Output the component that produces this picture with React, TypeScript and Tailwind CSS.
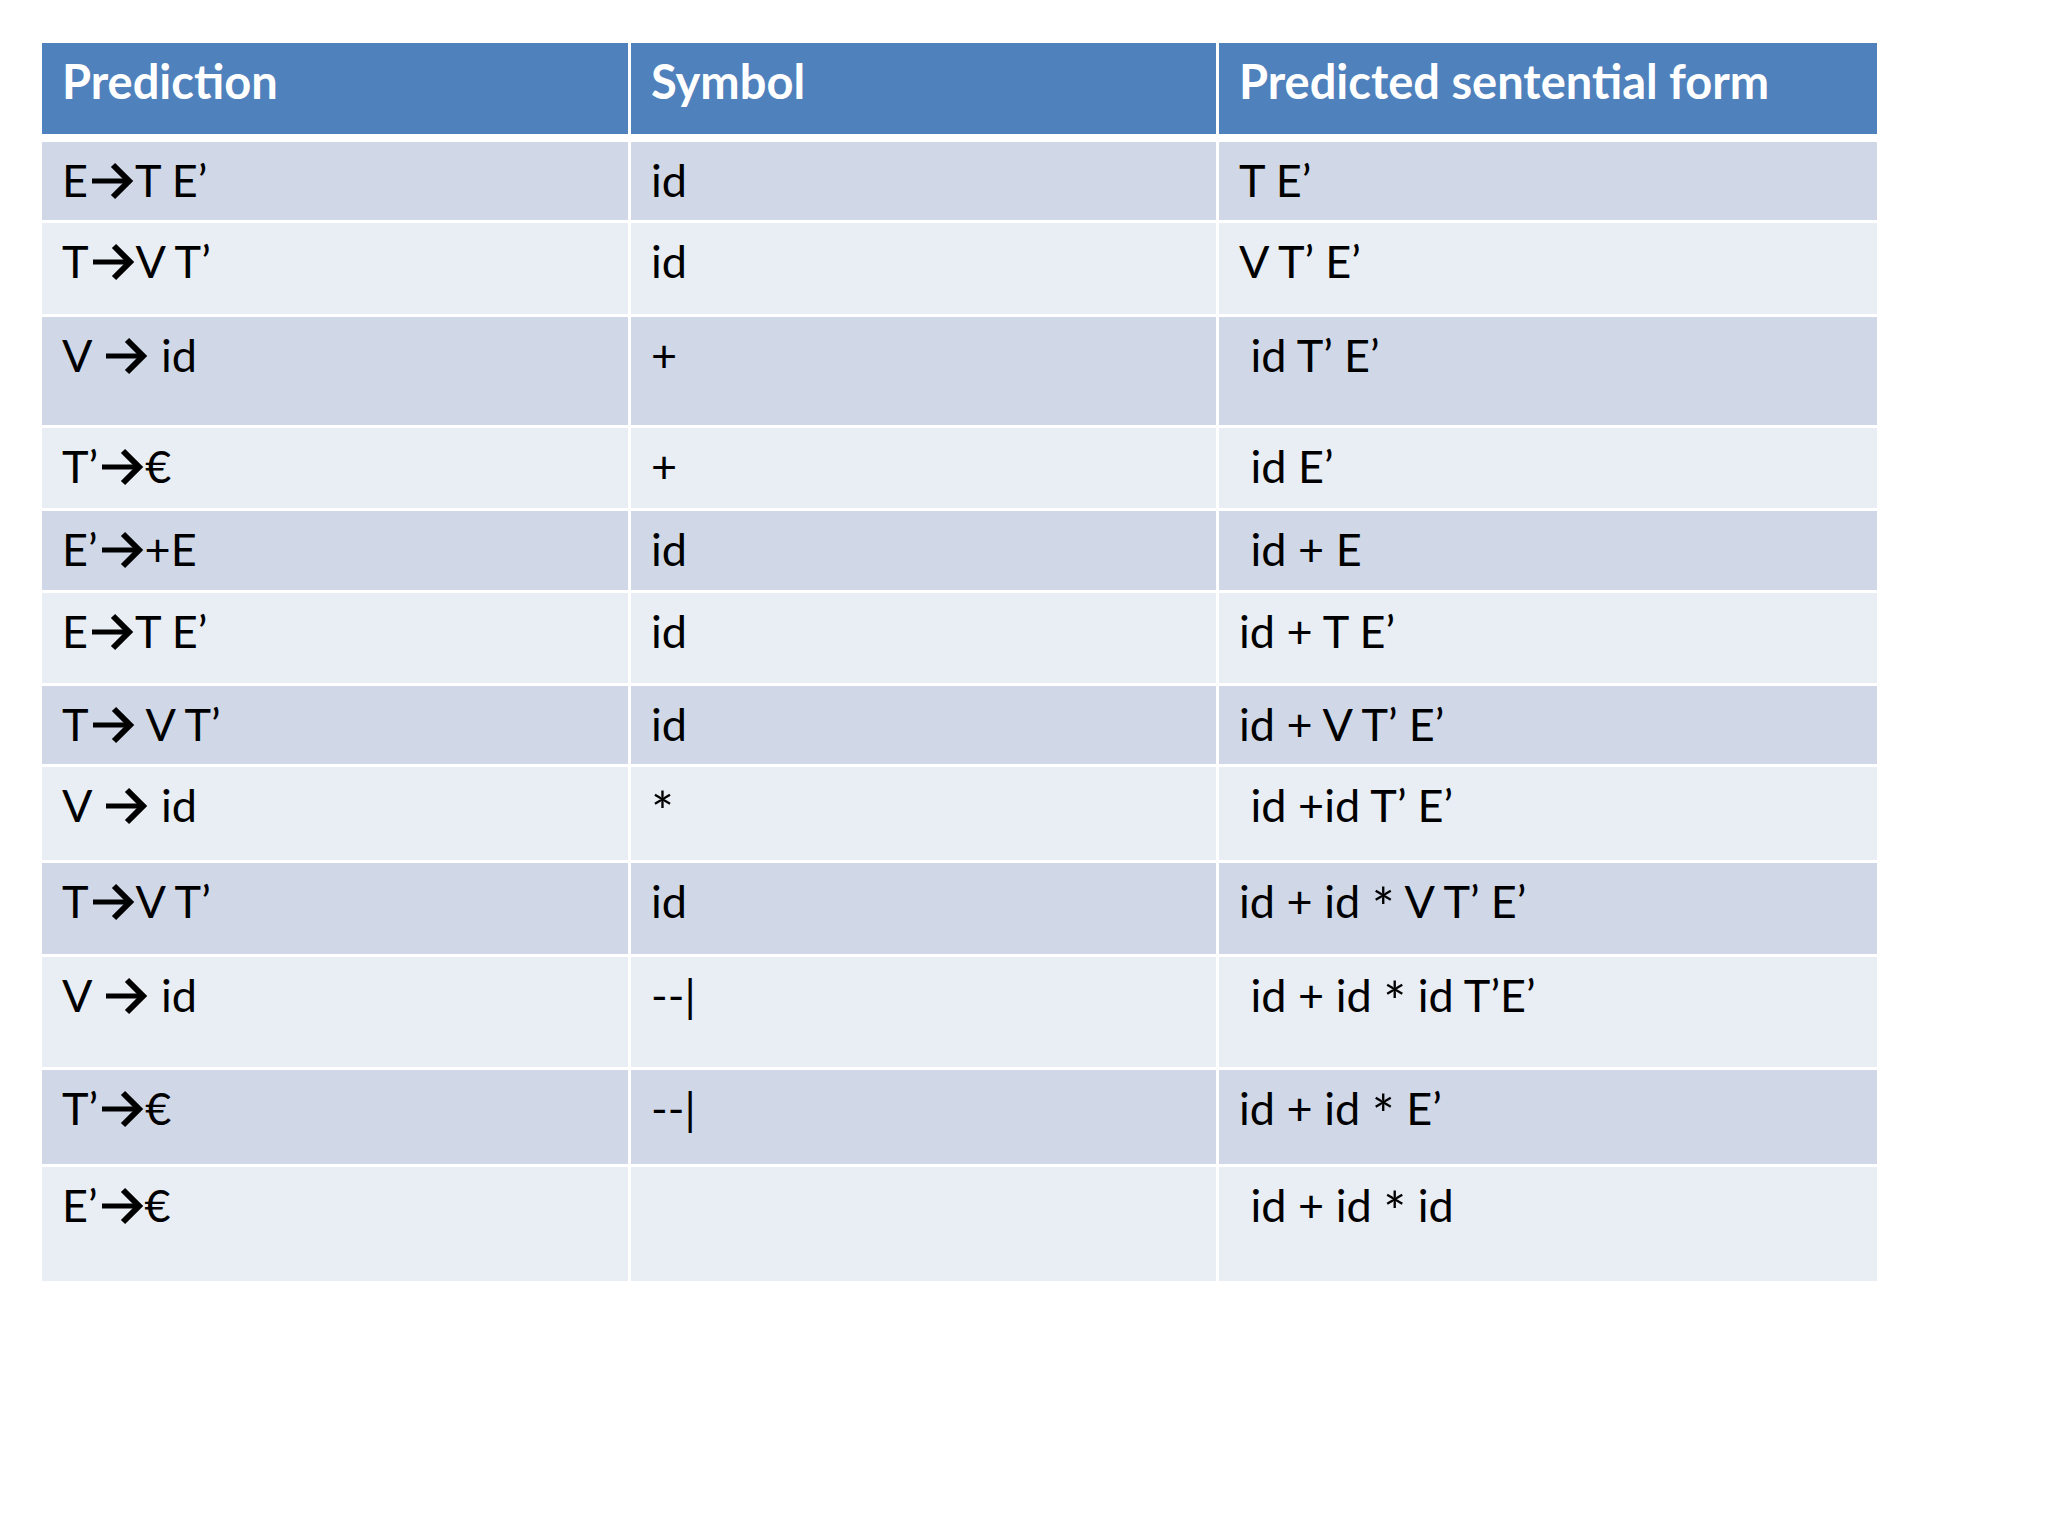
const rows = [
  { h: "h-[78px]", cells: ["E→T E’", "id", "T E’"] },
  { h: "h-[91px]", cells: ["T→V T’", "id", "V T’ E’"] },
  { h: "h-[108px]", cells: ["V → id", "+", " id T’ E’"] },
  { h: "h-[80px]", cells: ["T’→€", "+", " id E’"] },
  { h: "h-[79px]", cells: ["E’→+E", "id", " id + E"] },
  { h: "h-[90px]", cells: ["E→T E’", "id", "id + T E’"] },
  { h: "h-[78px]", cells: ["T→ V T’", "id", "id + V T’ E’"] },
  { h: "h-[93px]", cells: ["V → id", "*", " id +id T’ E’"] },
  { h: "h-[91px]", cells: ["T→V T’", "id", "id + id * V T’ E’"] },
  { h: "h-[110px]", cells: ["V → id", "--|", " id + id * id T’E’"] },
  { h: "h-[94px]", cells: ["T’→€", "--|", "id + id * E’"] },
  { h: "h-[114px]", cells: ["E’→€", "", " id + id * id"] },
];

const cols = "grid grid-cols-[586px_585px_658px] gap-x-[3px]";

function Arrow() {
  return (
    <svg
      width="40"
      height="34"
      viewBox="0 0 40 34"
      className="inline-block overflow-visible align-[-1px] ml-[4px] mr-[3px]"
    >
      <line x1="0" y1="17" x2="35" y2="17" stroke="black" strokeWidth="5" />
      <polyline
        points="21,1 37,17 21,33"
        fill="none"
        stroke="black"
        strokeWidth="6"
        strokeLinejoin="miter"
      />
    </svg>
  );
}

// splits a cell into text, drawn arrows and bigger asterisks
function CellText({ text }: { text: string }) {
  const tokens = text.split(/(→|\*)/);
  return (
    <>
      {tokens.map((t, i) =>
        t === "→" ? (
          <Arrow key={i} />
        ) : t === "*" ? (
          <span key={i} className="text-[54px] leading-[0] align-[-9px]">
            *
          </span>
        ) : (
          <span key={i}>{t}</span>
        ),
      )}
    </>
  );
}

export default function App() {
  return (
    <div className="min-h-screen w-[2048px] h-[1536px] bg-white pl-[42px] pt-[43px] font-['Lato','Open_Sans',sans-serif]">
      <div className="w-[1835px] flex flex-col">
        <div className={`${cols} h-[91px]`}>
          {["Prediction", "Symbol", "Predicted sentential form"].map((t) => (
            <div
              key={t}
              className="bg-[#4f81bd] text-white font-bold text-[47px] leading-[1.2] pl-[20px] pt-[10px]"
            >
              {t}
            </div>
          ))}
        </div>
        <div className="flex flex-col gap-y-[3px] mt-[8px]">
          {rows.map((r, i) => (
            <div key={i} className={`${cols} ${r.h}`}>
              {r.cells.map((c, j) => (
                <div
                  key={j}
                  className={`${i % 2 === 0 ? "bg-[#d0d8e8]" : "bg-[#e9edf4]"} text-black text-[45px] leading-[1.2] whitespace-pre pl-[20px] pt-[11px]`}
                >
                  <CellText text={c} />
                </div>
              ))}
            </div>
          ))}
        </div>
      </div>
    </div>
  );
}
